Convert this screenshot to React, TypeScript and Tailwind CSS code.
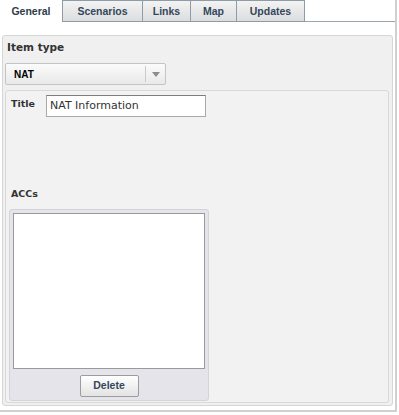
import React from "react";

const tabFont = { fontFamily: '"Liberation Sans", Arial, sans-serif' };

function Tab({ label, w, active, first }: { label: string; w: string; active?: boolean; first?: boolean }) {
  if (active) {
    return (
      <div className={`${w} h-[22px] bg-white flex items-center justify-center text-[10.5px] font-bold text-[#2e3d4c] leading-[22px]`}>
        {label}
      </div>
    );
  }
  return (
    <div
      className={`${w} h-[22px] border-t border-r border-b ${first ? "border-l" : ""} border-[#8e9ca8] bg-gradient-to-b from-[#f3f3f3] to-[#dcdddf] flex items-center justify-center text-[10.5px] font-bold text-[#34475a] leading-[20px]`}
    >
      {label}
    </div>
  );
}

export default function App() {
  return (
    <div className="w-[399px] h-[415px] bg-white" style={tabFont}>
      <div className="w-[397px] h-[412px] border-r-2 border-b-2 border-[#d0d0d0] bg-white flex flex-col">
        {/* Tabs */}
        <div className="flex h-[22px] shrink-0">
          <Tab label="General" w="w-[62px]" active />
          <Tab label="Scenarios" w="w-[81px]" first />
          <Tab label="Links" w="w-[48px]" />
          <Tab label="Map" w="w-[46px]" />
          <Tab label="Updates" w="w-[68px]" />
          <div className="flex-1 h-[22px] border-b border-[#9aa6ad]" />
        </div>

        {/* Outer panel */}
        <div className="ml-[2px] mt-[13px] w-[391px] h-[371px] border border-[#d6d6d6] rounded-[3px] bg-[#f0f0f0] flex flex-col">
          <div
            className="pl-[4px] pt-[5px] text-[10.5px] leading-[12px] font-bold text-[#333]"
            style={{ fontFamily: '"DejaVu Sans", Verdana, sans-serif' }}
          >
            Item type
          </div>
          <div className="ml-[2px] mt-[10px] w-[161px] h-[22px] border border-[#c4c4c4] rounded-[2px] bg-gradient-to-b from-[#fbfbfb] to-[#e9e9e9] flex items-center">
            <div className="flex-1 pl-[8px] text-[10px] font-bold text-black">NAT</div>
            <div className="w-px h-[16px] bg-[#cacaca]" />
            <div className="w-[19px] flex items-center justify-center">
              <svg width="8" height="5" viewBox="0 0 8 5">
                <path d="M0 0 H8 L4 5 Z" fill="#8c8c8c" />
              </svg>
            </div>
          </div>

          {/* Inner panel */}
          <div className="ml-[2px] mt-[5px] w-[384px] h-[313px] border border-[#d9d9d9] rounded-[3px] bg-[#f2f2f2] flex flex-col">
            <div className="flex items-start pt-[4px] pl-[5px]">
              <div
                className="w-[35px] mt-[3px] text-[9.5px] leading-[12px] font-bold text-[#333]"
                style={{ fontFamily: '"DejaVu Sans", Verdana, sans-serif' }}
              >
                Title
              </div>
              <div
                className="w-[160px] h-[22px] border border-[#a8a8a8] border-t-[#7d7d7d] bg-white flex items-center pl-[3px] text-[11px] text-[#333]"
                style={{ fontFamily: '"DejaVu Sans", Verdana, sans-serif' }}
              >
                NAT Information
              </div>
            </div>

            <div
              className="pl-[5px] mt-[71px] text-[9.5px] leading-[12px] font-bold text-[#333]"
              style={{ fontFamily: '"DejaVu Sans", Verdana, sans-serif' }}
            >
              ACCs
            </div>

            <div className="ml-[3px] mt-[9px] w-[200px] h-[192px] border border-[#d3d3da] rounded-[3px] bg-[#e4e4ea] p-[3px] flex flex-col items-center">
              <div className="w-full h-[156px] border border-[#9a9a9a] bg-white" />
              <div className="mt-[6px] w-[59px] h-[22px] border border-[#9c9c9c] rounded-[2px] bg-gradient-to-b from-[#ffffff] to-[#e3e3e3] flex items-center justify-center text-[10.5px] font-bold text-[#34475a]">
                Delete
              </div>
            </div>
          </div>
        </div>
      </div>
    </div>
  );
}
